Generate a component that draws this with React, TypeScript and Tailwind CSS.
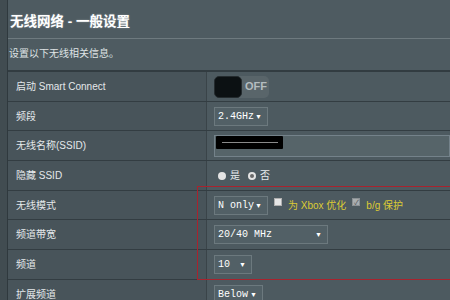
import React from "react";

const F = { fontFamily: '"Liberation Sans", "Noto Sans CJK SC", sans-serif' };
const M = { fontFamily: '"Liberation Mono", "DejaVu Sans Mono", monospace' };

function Arrow() {
  return <span className="text-[7px] text-white leading-none">▼</span>;
}

function Select({ label, w }: { label: string; w: string }) {
  return (
    <div
      className={`${w} h-[19px] shrink-0 flex items-center justify-between pl-[3px] pr-[5px] border border-[#6c797e] bg-[#526066] whitespace-nowrap`}
    >
      <span className="text-[10px] text-white" style={M}>
        {label}
      </span>
      <Arrow />
    </div>
  );
}

function Row({ h, label, children }: { h: string; label: string; children?: React.ReactNode }) {
  return (
    <div className={`flex shrink-0 ${h} border-b border-[#333d42]`}>
      <div className="w-[198px] shrink-0 flex items-center pl-[8px] bg-[#48545a] text-[10px] text-[#e4e8ea]">
        {label}
      </div>
      <div className="w-[1px] shrink-0 bg-[#3a4449]" />
      <div className="flex-1 flex items-center pl-[7px] bg-[#4d5a60] whitespace-nowrap">{children}</div>
    </div>
  );
}

export default function App() {
  return (
    <div className="relative w-[450px] h-[300px] overflow-hidden bg-[#4e5b61] flex" style={F}>
      <div className="w-[8px] shrink-0 bg-[#414c51] border-r border-[#2f393e]" />
      <div className="flex-1 flex flex-col">
        <div className="h-[39px] shrink-0 pl-[2px] pt-[15px] text-[13.5px] font-bold text-white border-b border-[#6e7a7f] leading-none [text-shadow:0_0_2px_rgba(255,255,255,0.35)]">
          无线网络 - 一般设置
        </div>
        <div className="h-[31px] shrink-0 pl-[1px] pt-[10px] text-[10px] text-[#dfe3e5] leading-none">
          设置以下无线相关信息。
        </div>
        <div className="shrink-0 border-t-2 border-[#323c41]">
          <Row h="h-[30px]" label="启动 Smart Connect">
            <div className="w-[55px] h-[22px] rounded-[5px] bg-[#59656a] flex items-center">
              <div className="w-[28px] h-[22px] rounded-[5px] bg-[#0c1113] border border-[#242b2e]" />
              <span className="ml-[3px] text-[11px] font-bold text-[#b4bcbf]">OFF</span>
            </div>
          </Row>
          <Row h="h-[29px]" label="频段">
            <Select label="2.4GHz" w="w-[54px]" />
          </Row>
          <Row h="h-[30px]" label="无线名称(SSID)">
            <div className="flex-1 h-[22px] bg-[#566469] border border-[#74828a] relative">
              <div className="absolute left-[1px] top-0 w-[67px] h-[13px] bg-black rounded-[1px] flex items-center justify-center">
                <div className="w-[56px] h-[1px] bg-[#8a8a8a]" />
              </div>
            </div>
          </Row>
          <Row h="h-[30px]" label="隐藏 SSID">
            <div className="flex items-center text-[10px] text-[#e8ecee]">
              <span className="ml-[4px] w-[8px] h-[8px] rounded-full bg-[#e4e4e4]" />
              <span className="ml-[4px]">是</span>
              <span className="ml-[8px] w-[8px] h-[8px] rounded-full bg-[#e4e4e4] flex items-center justify-center">
                <span className="w-[4px] h-[4px] rounded-full bg-[#6a6a6a]" />
              </span>
              <span className="ml-[4px]">否</span>
            </div>
          </Row>
          <Row h="h-[29px]" label="无线模式">
            <Select label="N only" w="w-[54px]" />
            <span className="ml-[6px] w-[8px] h-[8px] shrink-0 bg-[#e6e6e6] border border-[#b0b0b0] self-start mt-[7px]" />
            <span className="ml-[6px] text-[10px] text-[#dccb34]">为 Xbox 优化</span>
            <span className="ml-[6px] w-[8px] h-[8px] shrink-0 bg-[#a9aeb0] border border-[#8a9094] self-start mt-[7px] flex items-center justify-center text-[7px] text-[#555] leading-none">✓</span>
            <span className="ml-[6px] text-[10px] text-[#dccb34]">b/g 保护</span>
          </Row>
          <Row h="h-[30px]" label="频道带宽">
            <Select label="20/40 MHz" w="w-[114px]" />
          </Row>
          <Row h="h-[30px]" label="频道">
            <Select label="10" w="w-[38px]" />
          </Row>
          <Row h="h-[30px]" label="扩展频道">
            <Select label="Below" w="w-[49px]" />
          </Row>
        </div>
      </div>
      <div className="absolute left-[197px] top-[186px] w-[260px] h-[94px] border border-[#a8232e]" />
    </div>
  );
}
